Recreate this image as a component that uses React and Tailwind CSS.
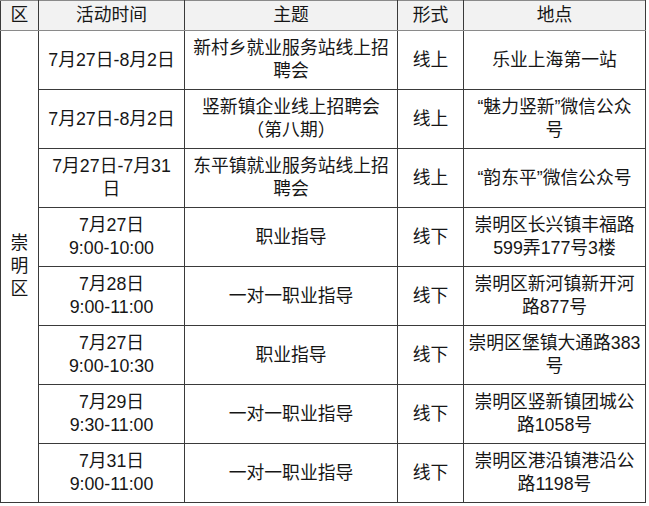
import React from "react";

const rows = [
  { date: ["7月27日-8月2日"], topic: ["新村乡就业服务站线上招", "聘会"], form: "线上", place: ["乐业上海第一站"] },
  { date: ["7月27日-8月2日"], topic: ["竖新镇企业线上招聘会", "（第八期）"], form: "线上", place: ["“魅力竖新”微信公众", "号"] },
  { date: ["7月27日-7月31", "日"], topic: ["东平镇就业服务站线上招", "聘会"], form: "线上", place: ["“韵东平”微信公众号"] },
  { date: ["7月27日", "9:00-10:00"], topic: ["职业指导"], form: "线下", place: ["崇明区长兴镇丰福路", "599弄177号3楼"] },
  { date: ["7月28日", "9:00-11:00"], topic: ["一对一职业指导"], form: "线下", place: ["崇明区新河镇新开河", "路877号"] },
  { date: ["7月27日", "9:00-10:30"], topic: ["职业指导"], form: "线下", place: ["崇明区堡镇大通路383", "号"] },
  { date: ["7月29日", "9:30-11:00"], topic: ["一对一职业指导"], form: "线下", place: ["崇明区竖新镇团城公", "路1058号"] },
  { date: ["7月31日", "9:00-11:00"], topic: ["一对一职业指导"], form: "线下", place: ["崇明区港沿镇港沿公", "路1198号"] },
];

function Lines({ lines }) {
  return (
    <>
      {lines.map((l, i) => (
        <div key={i} className="whitespace-nowrap">{l}</div>
      ))}
    </>
  );
}

export default function App() {
  const td = "border border-[#3a3a3a] text-center align-middle p-0";
  return (
    <div
      className="w-[649px] h-[506px] bg-white text-[#161616] text-[17.8px] leading-[23px]"
      style={{ fontFamily: '"Liberation Sans", "Noto Sans CJK SC", sans-serif' }}
    >
      <table className="table-fixed border-collapse w-[646px]">
        <colgroup>
          <col className="w-[38px]" />
          <col className="w-[146px]" />
          <col className="w-[213px]" />
          <col className="w-[66px]" />
          <col className="w-[182px]" />
        </colgroup>
        <thead>
          <tr className="h-[30px] bg-[#f2f2f2]">
            <th className={`${td} font-normal border-b-[#8a8a8a] border-t-[#8a8a8a]`}>区</th>
            <th className={`${td} font-normal border-b-[#8a8a8a] border-t-[#8a8a8a]`}>活动时间</th>
            <th className={`${td} font-normal border-b-[#8a8a8a] border-t-[#8a8a8a]`}>主题</th>
            <th className={`${td} font-normal border-b-[#8a8a8a] border-t-[#8a8a8a]`}>形式</th>
            <th className={`${td} font-normal border-b-[#8a8a8a] border-t-[#8a8a8a]`}>地点</th>
          </tr>
        </thead>
        <tbody>
          {rows.map((r, i) => (
            <tr key={i} className="h-[59px]">
              {i === 0 && (
                <td rowSpan={8} className={td}>
                  <div>崇</div>
                  <div>明</div>
                  <div>区</div>
                </td>
              )}
              <td className={td}><Lines lines={r.date} /></td>
              <td className={td}><Lines lines={r.topic} /></td>
              <td className={td}>{r.form}</td>
              <td className={td}><Lines lines={r.place} /></td>
            </tr>
          ))}
        </tbody>
      </table>
    </div>
  );
}
